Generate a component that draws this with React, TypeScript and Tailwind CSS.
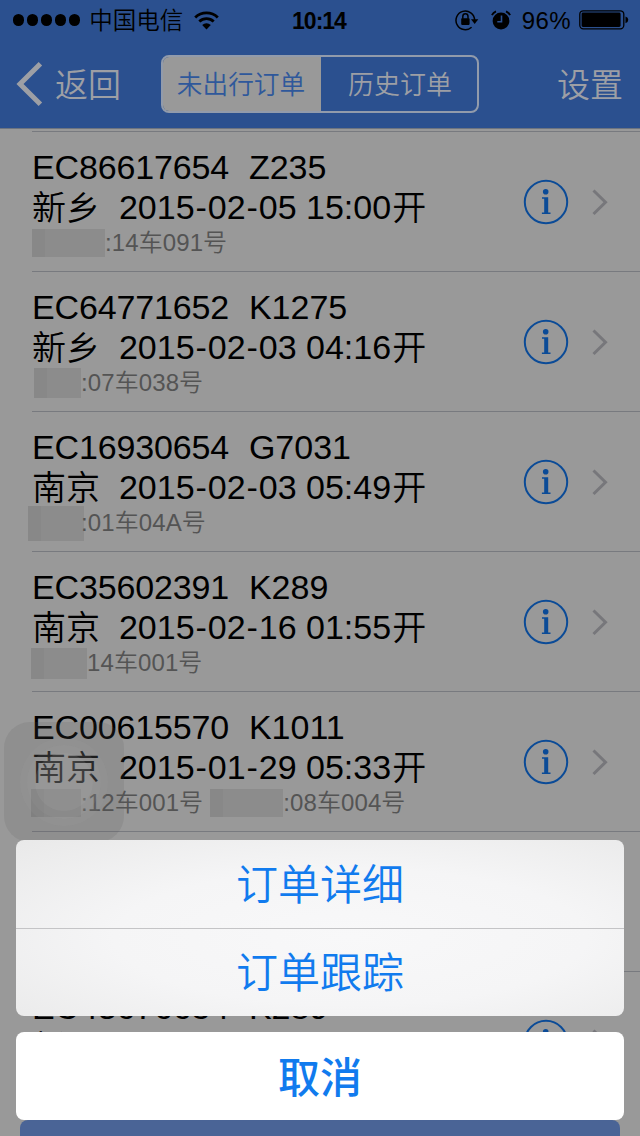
import React from "react";

type Order = {
  id: string;
  train: string;
  city: string;
  date: string;
  time: string;
  detail: React.ReactNode;
};

function Mask({ className }: { className: string }) {
  return (
    <span className={`flex shrink-0 ${className}`}>
      <span className="w-[13px] bg-[#888888]" />
      <span className="flex-1 bg-[#8c8c8c]" />
    </span>
  );
}

const orders: Order[] = [
  {
    id: "EC86617654", train: "Z235", city: "新乡", date: "2015-02-05", time: "15:00",
    detail: <><Mask className="h-7 w-[73px]" /><span>:14车091号</span></>,
  },
  {
    id: "EC64771652", train: "K1275", city: "新乡", date: "2015-02-03", time: "04:16",
    detail: <><Mask className="ml-0.5 h-[30px] w-[47px]" /><span>:07车038号</span></>,
  },
  {
    id: "EC16930654", train: "G7031", city: "南京", date: "2015-02-03", time: "05:49",
    detail: <><Mask className="-ml-1 h-[35px] w-[56px]" /><span className="-ml-[3px]">:01车04A号</span></>,
  },
  {
    id: "EC35602391", train: "K289", city: "南京", date: "2015-02-16", time: "01:55",
    detail: <><Mask className="-ml-px h-[31px] w-[56px]" /><span>14车001号</span></>,
  },
  {
    id: "EC00615570", train: "K1011", city: "南京", date: "2015-01-29", time: "05:33",
    detail: (
      <>
        <Mask className="-ml-px h-7 w-[50px]" />
        <span>:12车001号</span>
        <Mask className="ml-[7px] h-7 w-[73px]" />
        <span>:08车004号</span>
      </>
    ),
  },
];

const lastOrder: Order = {
  id: "EC43676654", train: "K289", city: "新乡", date: "", time: "", detail: null,
};

function OrderDate({ value }: { value: string }) {
  const parts = value.split("-");
  return (
    <>
      {parts.map((p, i) => (
        <React.Fragment key={i}>
          {i > 0 && <span className="inline-block w-[13.2px] text-center">-</span>}
          {p}
        </React.Fragment>
      ))}
    </>
  );
}

function OrderRow({ order }: { order: Order }) {
  return (
    <div className="ml-8 flex h-[140px] shrink-0 border-b border-[#787a7f] last:border-transparent">
      <div className="min-w-0 flex-1 pt-[15px]">
        <div className="h-10 whitespace-pre text-[34px] leading-10 text-black">
          <span className="tracking-[-0.15px]">{order.id}</span>{"  "}<span className="ml-px">{order.train}</span>
        </div>
        <div className="h-10 whitespace-pre text-[34px] leading-10 text-black">
          <span className="inline-block translate-y-px">{order.city}</span>{"  "}
          {order.date && (
            <>
              <OrderDate value={order.date} /> {order.time}
              <span className="ml-px inline-block translate-y-px">开</span>
            </>
          )}
        </div>
        <div className="flex h-8 items-center whitespace-pre text-[24px] leading-8 tracking-[0.1px] text-[#545454]">
          {order.detail}
        </div>
      </div>
      <div className="flex shrink-0 items-center gap-[22px] pr-[31px]">
        <svg width="46" height="46" viewBox="0 0 46 46" className="text-[#0b4b97]">
          <circle cx="23" cy="23" r="21.2" fill="none" stroke="currentColor" strokeWidth="2" />
          <circle cx="22.7" cy="12.7" r="2.8" fill="currentColor" />
          <path d="M19 18.3h6.2v15.2h2.3v1.4h-8.6v-1.4h2.3V19.7H19z" fill="currentColor" />
        </svg>
        <svg width="18" height="28" viewBox="0 0 18 28" fill="none" stroke="#77777b" strokeWidth="3">
          <path d="M2.5 2.5 14.5 14.2 2.5 26" />
        </svg>
      </div>
    </div>
  );
}

function StatusBar() {
  return (
    <div className="grid h-10 grid-cols-[1fr_80px_1fr] items-center px-[13px] text-[24px] whitespace-nowrap text-black">
      <div className="flex items-center">
        <div className="flex gap-[2.6px]">
          {[0, 1, 2, 3, 4].map((i) => (
            <span key={i} className="size-[11.4px] rounded-full bg-black" />
          ))}
        </div>
        <span className="ml-[9px] pt-[3px] text-[23.5px]">中国电信</span>
        <svg width="25" height="19" viewBox="0 0 25 19" className="ml-[11px]" fill="none" stroke="black">
          <path d="M1.2 6.4a16.2 16.2 0 0 1 22.6 0" strokeWidth="2.8" />
          <path d="M5.3 10.6a10.4 10.4 0 0 1 14.4 0" strokeWidth="2.8" />
          <path d="M12.5 18.4 8.2 14a6.2 6.2 0 0 1 8.6 0z" fill="black" stroke="none" />
        </svg>
      </div>
      <div className="pt-0.5 pr-0.5 text-center text-[23px] font-bold tracking-[-1px]">10:14</div>
      <div className="flex items-center justify-end">
        <svg width="24" height="22" viewBox="0 0 24 22" fill="none" stroke="black" strokeWidth="1.5">
          <path d="M16.6 18.2A9.3 9.3 0 1 1 19.6 11" />
          <path d="M16 10.3h7.3l-3.6 4.6z" fill="black" stroke="none" />
          <rect x="6.2" y="9.3" width="8.4" height="6.6" rx=".8" fill="black" stroke="none" />
          <path d="M7.8 9.8V7.4a2.6 2.6 0 0 1 5.2 0v2.4" />
        </svg>
        <svg width="20" height="20" viewBox="0 0 20 20" className="ml-3" fill="none" stroke="black">
          <circle cx="10" cy="11" r="8.4" fill="black" stroke="none" />
          <path d="M.9 5.2A8 8 0 0 1 5 1.3M19.1 5.2A8 8 0 0 0 15 1.3" strokeWidth="1.8" />
          <path d="M10.5 5.4v6.4H6.3" stroke="#2b508f" strokeWidth="1.6" />
        </svg>
        <span className="ml-[11px] pt-0.5 tracking-[0.4px]">96%</span>
        <svg width="50" height="20" viewBox="0 0 50 20" className="-mr-[2px] ml-2">
          <rect x=".8" y=".8" width="44" height="18" rx="3.5" fill="none" stroke="black" strokeWidth="1.3" />
          <rect x="2.6" y="2.6" width="39" height="14.4" rx="1.4" fill="black" />
          <path d="M46.5 6.4q2.8.8 2.8 3.4t-2.8 3.4z" fill="black" />
        </svg>
      </div>
    </div>
  );
}

function NavBar() {
  return (
    <div className="flex h-[88px] items-center justify-between pr-[17px] pl-4 text-[33px] text-[#9d9fa5]">
      <div className="flex w-[145px] items-center">
        <svg width="27" height="44" viewBox="0 0 27 44" fill="none" stroke="currentColor" strokeWidth="5">
          <path d="M24.4 1.8 4 22 24.4 42.2" />
        </svg>
        <span className="ml-3 pt-[3px]">返回</span>
      </div>
      <div className="mr-[78px] flex h-[58px] w-[318px] overflow-hidden rounded-lg border-2 border-[#929bab] text-[26px]">
        <div className="flex w-[158px] items-center justify-center bg-[#999999] pt-0.5 pr-0.5 text-[25.7px] text-[#2f589b]">未出行订单</div>
        <div className="flex flex-1 items-center justify-center pt-0.5 pl-0.5">历史订单</div>
      </div>
      <span className="shrink-0 pt-[3px]">设置</span>
    </div>
  );
}

export default function App() {
  return (
    <div className="relative flex h-[1136px] w-[640px] flex-col overflow-hidden bg-[#999999] font-['Liberation_Sans','Noto_Sans_CJK_SC',sans-serif] font-[350]">
      <header className="h-[129px] shrink-0 border-b border-[#6d7480] bg-[#2b508f]">
        <StatusBar />
        <NavBar />
      </header>
      <main className="flex flex-col">
        <div className="ml-8 h-[3px] shrink-0 border-b border-[#787a7f]" />
        {orders.map((o) => (
          <OrderRow key={o.id} order={o} />
        ))}
        <div className="ml-8 h-[140px] shrink-0 border-b border-[#787a7f]" />
        <OrderRow order={lastOrder} />
      </main>

      <div className="absolute top-[722px] left-1 flex size-[120px] items-center justify-center rounded-[26px] bg-[#555555]/15">
        <div className="flex size-[88px] items-center justify-center rounded-full bg-[#a8a8a8]/10">
          <div className="flex size-[74px] items-center justify-center rounded-full bg-[#a8a8a8]/10">
            <div className="size-[58px] rounded-full bg-[#b0b0b0]/15" />
          </div>
        </div>
      </div>

      <div className="absolute right-5 bottom-0 left-5 h-4 rounded-t-lg bg-[#4a6496]" />

      <div className="absolute top-[840px] right-4 left-4 flex flex-col gap-4 text-[42px] text-[#117bee]">
        <div className="flex h-[176px] flex-col overflow-hidden rounded-lg bg-[radial-gradient(ellipse_at_55%_55%,#f8f8f9_0%,#f5f5f6_50%,#e9e9e9_100%)]">
          <button className="flex h-[89px] items-center justify-center border-b border-[#c4c4c6] pt-0.5">订单详细</button>
          <button className="flex flex-1 items-center justify-center pt-0.5">订单跟踪</button>
        </div>
        <button className="flex h-[88px] items-center justify-center rounded-lg bg-white pt-1 font-medium">取消</button>
      </div>
    </div>
  );
}
